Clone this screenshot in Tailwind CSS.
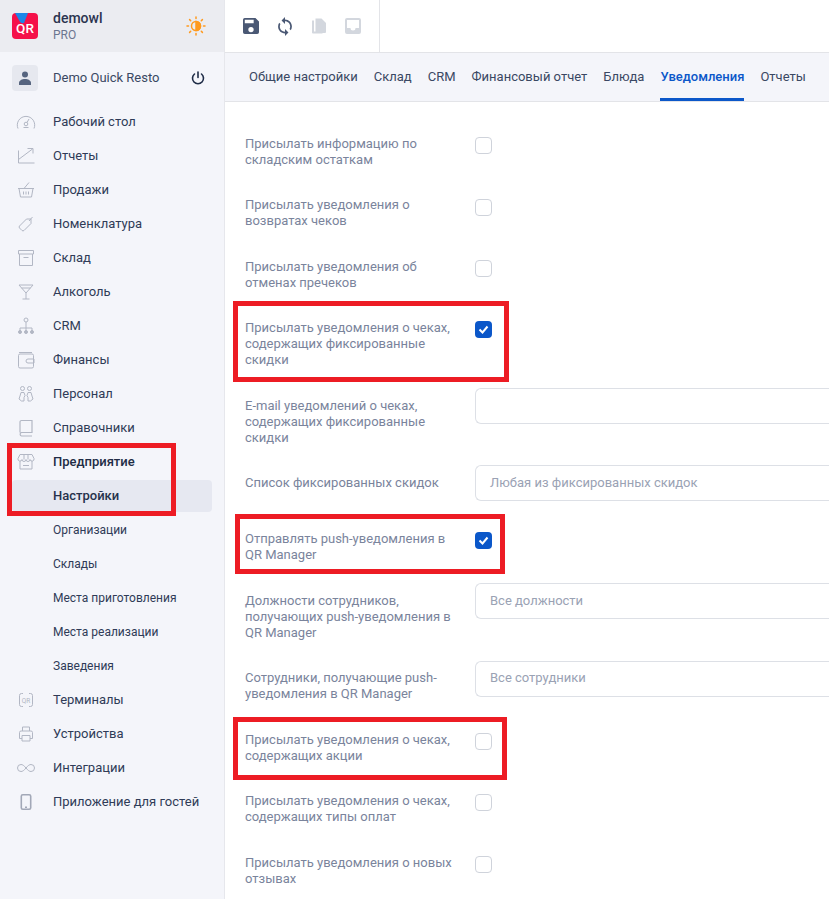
<!DOCTYPE html>
<html lang="ru">
<head>
    <meta charset="UTF-8">
    <title>Настройки</title>
    <script src="https://cdn.jsdelivr.net/npm/@tailwindcss/browser@4"></script>
</head>
<body class="bg-white h-[899px] w-[829px] overflow-hidden relative font-['Roboto',sans-serif] text-[13px] leading-4 text-[#2f3b57]">
<div class="flex h-full">
    <!-- sidebar -->
    <aside class="w-[225px] shrink-0 bg-[#f4f5fa] border-r border-[#e6e7ec]">
        <div class="h-[52px] bg-[#ebecf1] flex items-center pl-3 pr-[18px]">
            <svg class="w-[26px] h-[26px] shrink-0" viewBox="0 0 26 26">
                <rect width="26" height="26" rx="4" fill="#f5114a"/>
                <path d="M3 0H16L12 10Q9 11 7.500 8Z" fill="#1c86e8"/>
                <text x="13" y="19.700" text-anchor="middle" font-family="Roboto" font-weight="500" font-size="13.500" fill="#fff">QR</text>
            </svg>
            <div class="ml-[15px] flex-1">
                <div class="text-[14px] font-medium leading-4 text-[#2b3450]">demowl</div>
                <div class="text-[12px] leading-4 mt-px text-[#6b7690]">PRO</div>
            </div>
            <svg class="w-[20px] h-[20px]" viewBox="0 0 20 20" fill="none" stroke="#ff9a1f" stroke-width="1.500" stroke-linecap="round">
                <circle cx="10" cy="10" r="4.500"/>
                <path d="M10 5.500a4.500 4.500 0 0 1 0 9z" fill="#ff9a1f"/>
                <path d="M10 1v1.500M10 17.500V19M1 10h1.500M17.500 10H19M3.600 3.600l1.100 1.100M15.300 15.300l1.100 1.100M3.600 16.400l1.100-1.100M15.300 4.700l1.100-1.100"/>
            </svg>
        </div>
        <div class="h-[52px] flex items-center pl-3 pr-[19px]">
            <div class="w-[26px] h-[26px] rounded-[4px] bg-[#e6e8ef] flex items-center justify-center">
                <svg class="w-4 h-4" viewBox="0 0 16 16" fill="#56647f"><circle cx="8" cy="4.500" r="3"/><path d="M2 15v-2c0-2.500 3-4 6-4s6 1.500 6 4v2z"/></svg>
            </div>
            <div class="ml-[15px] flex-1 text-[#3a4863]">Demo Quick Resto</div>
            <svg class="w-[14px] h-[14px]" viewBox="0 0 14 14" fill="none" stroke="#1f2c47" stroke-width="1.600" stroke-linecap="round"><path d="M7 1v5.500"/><path d="M3.500 3a5.500 5.500 0 1 0 7 0"/></svg>
        </div>
        <nav class="pt-[1px]">
            <a class="flex items-center h-[34px] pl-4"><svg class="w-[20px] h-[20px] mr-[17px] shrink-0" viewBox="0 0 20 20" fill="none" stroke="#b2b7c4" stroke-width="1"><path d="M2 16.500a8.700 8.700 0 1 1 16 0"/><path d="M7.500 15.500h5"/><circle cx="10" cy="12" r="1.800"/><path d="M11 10.500l2-3.500"/></svg>Рабочий стол</a>
            <a class="flex items-center h-[34px] pl-4"><svg class="w-[20px] h-[20px] mr-[17px] shrink-0" viewBox="0 0 20 20" fill="none" stroke="#b2b7c4" stroke-width="1"><path d="M2.500 4.500v12.500h16"/><path d="M2.500 13.500l14-10.500M11.500 2.500h5.500v5"/></svg>Отчеты</a>
            <a class="flex items-center h-[34px] pl-4"><svg class="w-[20px] h-[20px] mr-[17px] shrink-0" viewBox="0 0 20 20" fill="none" stroke="#b2b7c4" stroke-width="1"><path d="M2 8.500h16M3 8.500l1.500 8.500h11L17 8.500M8 8.500l5-6M7.500 11.500v3M10 11.500v3M12.500 11.500v3"/></svg>Продажи</a>
            <a class="flex items-center h-[34px] pl-4"><svg class="w-[20px] h-[20px] mr-[17px] shrink-0" viewBox="0 0 20 20" fill="none" stroke="#b2b7c4" stroke-width="1"><path d="M3.500 12l7-7h4.500v4.500l-7 7a1.500 1.500 0 0 1-2 0l-2.500-2.500a1.500 1.500 0 0 1 0-2z"/><path d="M13 7l3.500-4"/></svg>Номенклатура</a>
            <a class="flex items-center h-[34px] pl-4"><svg class="w-[20px] h-[20px] mr-[17px] shrink-0" viewBox="0 0 20 20" fill="none" stroke="#b2b7c4" stroke-width="1"><path d="M2.500 2.500h15v3.500h-15zM3.500 6V17.500h13V6M7.500 9.500h5"/></svg>Склад</a>
            <a class="flex items-center h-[34px] pl-4"><svg class="w-[20px] h-[20px] mr-[17px] shrink-0" viewBox="0 0 20 20" fill="none" stroke="#b2b7c4" stroke-width="1"><path d="M3 3h14l-7 8zM5.500 6h9M10 11v6M6.500 17h7"/></svg>Алкоголь</a>
            <a class="flex items-center h-[34px] pl-4"><svg class="w-[20px] h-[20px] mr-[17px] shrink-0" viewBox="0 0 20 20" fill="none" stroke="#b2b7c4" stroke-width="1"><circle cx="10" cy="4" r="2"/><path d="M10 6v6M4 15v-3h12v3M10 12v3"/><circle cx="4" cy="16" r="1.500" fill="#b2b7c4"/><circle cx="10" cy="16" r="1.500" fill="#b2b7c4"/><circle cx="16" cy="16" r="1.500" fill="#b2b7c4"/></svg>CRM</a>
            <a class="flex items-center h-[34px] pl-4"><svg class="w-[20px] h-[20px] mr-[17px] shrink-0" viewBox="0 0 20 20" fill="none" stroke="#b2b7c4" stroke-width="1"><rect x="2.500" y="4" width="15" height="14" rx="1.500"/><path d="M3 2.500h13M12 9h6v4h-6a2 2 0 0 1 0-4z"/></svg>Финансы</a>
            <a class="flex items-center h-[34px] pl-4"><svg class="w-[20px] h-[20px] mr-[17px] shrink-0" viewBox="0 0 20 20" fill="none" stroke="#b2b7c4" stroke-width="1"><circle cx="6.500" cy="4.500" r="2"/><circle cx="13.500" cy="4.500" r="2"/><path d="M5 8.500h3l1 3-1 2v3.500H5.500L3 15l1-3zM15 8.500h-3l-1 3 1 2v3.500h2.500L17 15l-1-3z"/></svg>Персонал</a>
            <a class="flex items-center h-[34px] pl-4"><svg class="w-[20px] h-[20px] mr-[17px] shrink-0" viewBox="0 0 20 20" fill="none" stroke="#b2b7c4" stroke-width="1.200"><path d="M4 14.500V4a1.500 1.500 0 0 1 1.500-1.500H16V14.500H5.500a1.800 1.800 0 0 0 0 3.500H16"/></svg>Справочники</a>
            <a class="flex items-center h-[34px] pl-4 font-medium text-[#212c45]"><svg class="w-[20px] h-[20px] mr-[17px] shrink-0" viewBox="0 0 20 20" fill="none" stroke="#b2b7c4" stroke-width="1"><path d="M4 2.500h12l2 4a2 2 0 0 1-4 1 2 2 0 0 1-4 0 2 2 0 0 1-4 0 2 2 0 0 1-4-1zM4 9v8h12V9M7 13.500h6M8 2.500v5M12 2.500v5"/></svg>Предприятие</a>
            <a class="flex items-center h-[32px] my-px ml-3 mr-3 pl-[41px] rounded-[4px] bg-[#e6e8f1] font-medium text-[#26324c]">Настройки</a>
            <a class="flex items-center h-[34px] pl-[53px] text-[12px]">Организации</a>
            <a class="flex items-center h-[34px] pl-[53px] text-[12px]">Склады</a>
            <a class="flex items-center h-[34px] pl-[53px] text-[12px]">Места приготовления</a>
            <a class="flex items-center h-[34px] pl-[53px] text-[12px]">Места реализации</a>
            <a class="flex items-center h-[34px] pl-[53px] text-[12px]">Заведения</a>
            <a class="flex items-center h-[34px] pl-4"><svg class="w-[20px] h-[20px] mr-[17px] shrink-0" viewBox="0 0 20 20" fill="none" stroke="#b2b7c4" stroke-width="1"><path d="M7 3.500H5.500a2 2 0 0 0-2 2v9a2 2 0 0 0 2 2H7M13 3.500h1.500a2 2 0 0 1 2 2v9a2 2 0 0 1-2 2H13"/><text x="10" y="12.500" text-anchor="middle" font-size="6.500" font-family="Roboto" fill="#b2b7c4" stroke="none">QR</text></svg>Терминалы</a>
            <a class="flex items-center h-[34px] pl-4"><svg class="w-[20px] h-[20px] mr-[17px] shrink-0" viewBox="0 0 20 20" fill="none" stroke="#b2b7c4" stroke-width="1"><path d="M6.500 7V3h7v4M6 14.500H3.500V8.500a1.500 1.500 0 0 1 1.500-1.500h10a1.500 1.500 0 0 1 1.500 1.500v6H14M6 11.500h8V17H6z"/></svg>Устройства</a>
            <a class="flex items-center h-[34px] pl-4"><svg class="w-[20px] h-[20px] mr-[17px] shrink-0" viewBox="0 0 20 20" fill="none" stroke="#b2b7c4" stroke-width="1"><path d="M10 10c-2-2.500-3.500-3.500-5-3.500a3.500 3.500 0 0 0 0 7c1.500 0 3-1 5-3.500s3.500-3.500 5-3.500a3.500 3.500 0 0 1 0 7c-1.500 0-3-1-5-3.500z"/></svg>Интеграции</a>
            <a class="flex items-center h-[34px] pl-4"><svg class="w-[20px] h-[20px] mr-[17px] shrink-0" viewBox="0 0 20 20" fill="none" stroke="#a2a8b7" stroke-width="1.600"><rect x="5.300" y="2.800" width="9.400" height="14.400" rx="1.500"/><path d="M9 15.300h2"/></svg>Приложение для гостей</a>
        </nav>
    </aside>

    <main class="flex-1 min-w-0">
        <!-- toolbar -->
        <div class="h-[53px] flex border-b border-[#e3e4e8]">
            <div class="w-[155px] border-r border-[#e3e4e8] flex items-center pl-[18px] gap-[18px]">
                <svg class="w-4 h-4" viewBox="3 3 18 18" fill="#4a5874"><path d="M17 3H5a2 2 0 0 0-2 2v14a2 2 0 0 0 2 2h14a2 2 0 0 0 2-2V7zm-5 16a3 3 0 1 1 0-6 3 3 0 0 1 0 6zm3-10H5V5h10z"/></svg>
                <svg class="w-4 h-[19px]" viewBox="4 1 16 22" fill="#4a5874"><path d="M12 4V1L8 5l4 4V6c3.310 0 6 2.690 6 6 0 1.010-.25 1.970-.7 2.800l1.460 1.460C19.540 15.030 20 13.570 20 12c0-4.420-3.580-8-8-8zm0 14c-3.310 0-6-2.690-6-6 0-1.010.25-1.970.7-2.800L5.240 7.740C4.460 8.970 4 10.430 4 12c0 4.420 3.580 8 8 8v3l4-4-4-4v3z"/></svg>
                <svg class="w-4 h-4" viewBox="0 0 16 16" fill="#d3d7de"><path d="M4.500 0.500h6l4.500 4.500v9a1 1 0 0 1-1 1H4.500z"/><path d="M1 2.500h2v11h8.500v2H2a1 1 0 0 1-1-1z"/></svg>
                <svg class="w-4 h-4" viewBox="0 0 16 16" fill="#d3d7de"><path d="M2 0h12a2 2 0 0 1 2 2v12a2 2 0 0 1-2 2H2a2 2 0 0 1-2-2V2a2 2 0 0 1 2-2zM2 2v8h3.500a2.500 2.500 0 0 0 5 0H14V2z" fill-rule="evenodd"/></svg>
            </div>
        </div>
        <!-- tabs -->
        <div class="h-[49px] bg-[#f4f5fa] border-b border-[#e3e4e8] flex pl-6 gap-4 text-[#3a4863]">
            <a class="flex items-center h-full">Общие настройки</a>
            <a class="flex items-center h-full">Склад</a>
            <a class="flex items-center h-full">CRM</a>
            <a class="flex items-center h-full">Финансовый отчет</a>
            <a class="flex items-center h-full">Блюда</a>
            <a class="flex items-center h-full font-medium text-[#0b57c9] border-b-[3px] border-[#0b57c9] pt-[3px]">Уведомления</a>
            <a class="flex items-center h-full">Отчеты</a>
        </div>
        <!-- form -->
        <div class="pt-[33.5px] pl-5 text-[#7a849c]">
            <div class="flex mb-[29.6px]"><div class="w-[230px] pr-3">Присылать информацию по складским остаткам</div><span class="w-[17px] h-[17px] mt-[1.5px] rounded-[4px] border border-[#cfd3db] bg-white"></span></div>
            <div class="flex mb-[29.6px]"><div class="w-[230px] pr-3">Присылать уведомления о возвратах чеков</div><span class="w-[17px] h-[17px] mt-[1.5px] rounded-[4px] border border-[#cfd3db] bg-white"></span></div>
            <div class="flex mb-[29.6px]"><div class="w-[230px] pr-3">Присылать уведомления об отменах пречеков</div><span class="w-[17px] h-[17px] mt-[1.5px] rounded-[4px] border border-[#cfd3db] bg-white"></span></div>
            <div class="flex mb-[29.6px]"><div class="w-[230px] pr-3">Присылать уведомления о чеках, содержащих фиксированные скидки</div><span class="w-[17px] h-[17px] mt-[0.5px] rounded-[4px] bg-[#0b57c9] flex items-center justify-center"><svg class="w-[11px] h-[11px]" viewBox="0 0 11 11" fill="none" stroke="#fff" stroke-width="2"><path d="M1.500 5.500l3 3 5-6"/></svg></span></div>
            <div class="flex mb-[29.6px]"><div class="w-[230px] pr-3">E-mail уведомлений о чеках, содержащих фиксированные скидки</div><div class="flex-1 h-0"><div class="-mt-[9.5px] h-[36px] rounded-l-[6px] border border-r-0 border-[#dde0e6]"></div></div></div>
            <div class="flex mb-[39.6px]"><div class="w-[230px] pr-3">Список фиксированных скидок</div><div class="flex-1 h-0"><div class="-mt-[10px] h-[36px] rounded-l-[6px] border border-r-0 border-[#dde0e6] pl-[14px] flex items-center text-[#9aa2b4]">Любая из фиксированных скидок</div></div></div>
            <div class="flex mb-[29.6px]"><div class="w-[230px] pr-3">Отправлять push-уведомления в QR Manager</div><span class="w-[17px] h-[17px] mt-[0.5px] rounded-[4px] bg-[#0b57c9] flex items-center justify-center"><svg class="w-[11px] h-[11px]" viewBox="0 0 11 11" fill="none" stroke="#fff" stroke-width="2"><path d="M1.500 5.500l3 3 5-6"/></svg></span></div>
            <div class="flex mb-[29.6px]"><div class="w-[230px] pr-3">Должности сотрудников, получающих push-уведомления в QR Manager</div><div class="flex-1 h-0"><div class="-mt-[9.5px] h-[36px] rounded-l-[6px] border border-r-0 border-[#dde0e6] pl-[14px] flex items-center text-[#9aa2b4]">Все должности</div></div></div>
            <div class="flex mb-[29.6px]"><div class="w-[230px] pr-3">Сотрудники, получающие push-уведомления в QR Manager</div><div class="flex-1 h-0"><div class="-mt-[9.5px] h-[36px] rounded-l-[6px] border border-r-0 border-[#dde0e6] pl-[14px] pb-0.5 flex items-center text-[#9aa2b4]">Все сотрудники</div></div></div>
            <div class="flex mb-[29.6px]"><div class="w-[230px] pr-3">Присылать уведомления о чеках, содержащих акции</div><span class="w-[17px] h-[17px] mt-[1.5px] rounded-[4px] border border-[#cfd3db] bg-white"></span></div>
            <div class="flex mb-[30px]"><div class="w-[230px] pr-3">Присылать уведомления о чеках, содержащих типы оплат</div><span class="w-[17px] h-[17px] mt-[0.5px] rounded-[4px] border border-[#cfd3db] bg-white"></span></div>
            <div class="flex mb-[29.6px]"><div class="w-[230px] pr-3">Присылать уведомления о новых отзывах</div><span class="w-[17px] h-[17px] mt-[0.5px] rounded-[4px] border border-[#cfd3db] bg-white"></span></div>
        </div>
    </main>
</div>
<!-- red annotation frames drawn over the page -->
<div class="absolute left-[7px] top-[443px] w-[169px] h-[73px] border-[5px] border-[#ed1c24]"></div>
<div class="absolute left-[233px] top-[301px] w-[276px] h-[81px] border-[5px] border-[#ed1c24]"></div>
<div class="absolute left-[235px] top-[514px] w-[270px] h-[60px] border-[5px] border-[#ed1c24]"></div>
<div class="absolute left-[233px] top-[717px] w-[274px] h-[63px] border-[5px] border-[#ed1c24]"></div>
</body>
</html>
